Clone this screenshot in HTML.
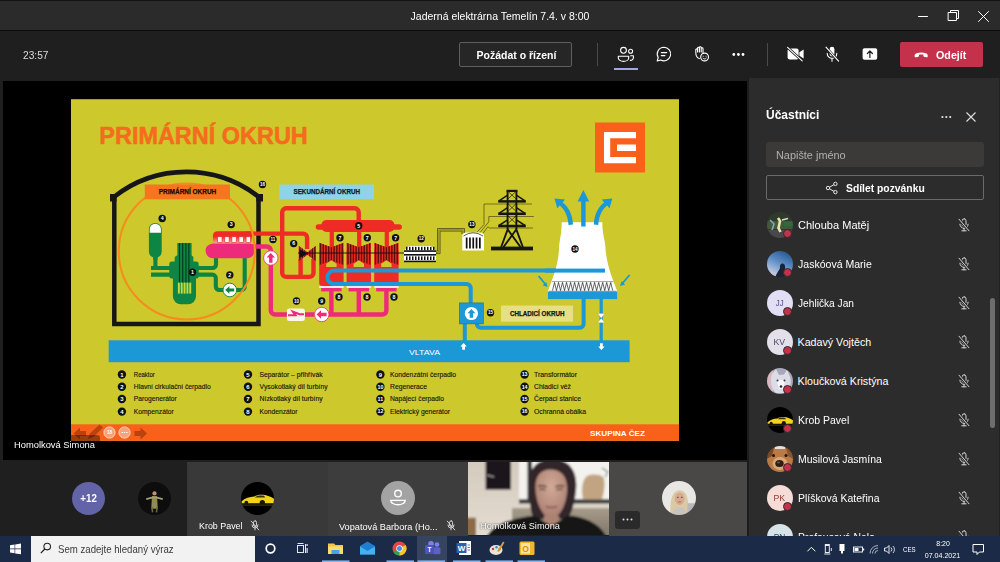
<!DOCTYPE html>
<html lang="cs">
<head>
<meta charset="utf-8">
<title>Jaderná elektrárna Temelín 7.4. v 8:00</title>
<style>
*{box-sizing:border-box;margin:0;padding:0}
html,body{width:1000px;height:562px;overflow:hidden;background:#1f1f1f;font-family:"Liberation Sans",sans-serif;color:#fff}
.abs{position:absolute}
.tx{white-space:nowrap}
#app{position:relative;width:1000px;height:562px;overflow:hidden;background:#1f1f1f}
#titlebar{left:0;top:0;width:1000px;height:30px;background:#2b2b2b;border-top:1px solid #141414}
#tline{left:0;top:30px;width:1000px;height:1px;background:#0c0c0c}
#toolbar{left:0;top:31px;width:1000px;height:47px;background:#1f1f1f}
#reqbtn{left:459px;top:42px;width:113px;height:24.500px;border:1px solid #5f5f5f;border-radius:2px;background:#262626}
.vsep{width:1px;background:#4a4a4a;top:43px;height:23px}
#leave{left:900px;top:42px;width:83px;height:25px;background:#c4314b;border-radius:2px}
#stage{left:3px;top:80.5px;width:744px;height:379px;background:#000}
#strip{left:0;top:459.5px;width:748px;height:76px;background:#1f1f1f}
#panel{left:747px;top:78px;width:253px;height:458px;background:#2c2c2c;border-left:2.500px solid #1c1c1c;border-right:1px solid #222}
#taskbar{left:0;top:535.5px;width:1000px;height:26.5px;background:#1b2a47}
.tile{top:461.7px;height:74px}
.av{border-radius:50%;overflow:hidden}
.dot{width:9px;height:9px;border-radius:50%;background:#c4314b;border:1px solid #2c2c2c}
</style>
</head>
<body>
<div id="app">
<div id="titlebar" class="abs"></div>
<div id="tline" class="abs"></div>
<div id="toolbar" class="abs"></div>
<div id="reqbtn" class="abs"></div>
<div class="abs vsep" style="left:597px"></div>
<div class="abs vsep" style="left:767px"></div>
<div id="leave" class="abs"></div>
<div class="abs tx" style="left:407.42px;top:10.32px;font-size:10.92px;line-height:13px;color:#fff;transform:scaleX(0.9615);transform-origin:50% 50%;">Jaderná elektrárna Temelín 7.4. v 8:00</div>
<div class="abs tx" style="left:22.70px;top:49.33px;font-size:10.6px;line-height:13px;color:#dcdcdc;transform:scaleX(0.9613);transform-origin:0 50%;">23:57</div>
<div class="abs tx" style="left:474.51px;top:48.62px;font-size:10.9px;line-height:13px;font-weight:bold;color:#fff;transform:scaleX(0.9617);transform-origin:50% 50%;">Požádat o řízení</div>
<div class="abs tx" style="left:936.00px;top:48.53px;font-size:11.16px;line-height:13px;font-weight:bold;color:#fff;transform:scaleX(0.9614);transform-origin:0 50%;">Odejít</div>
<svg class="abs" style="left:600px;top:0" width="400" height="78" viewBox="600 0 400 78" fill="none" stroke="#fff" stroke-width="1.1" stroke-linecap="round" stroke-linejoin="round">
<path d="M918.500 16.500H927.500" stroke-width="1"/>
<rect x="948.5" y="12.5" width="8" height="8" stroke-width="1"/><path d="M950.5 12.5V10.5H958.5V18.5H956.5" stroke-width="1"/>
<path d="M978.5 11.5L988.5 21.5M988.5 11.5L978.5 21.5" stroke-width="1"/>
<circle cx="623.5" cy="50.3" r="2.9"/><path d="M618.3 56.2H628.7V58a5.2 3.4 0 0 1-10.4 0Z"/>
<circle cx="630.6" cy="51.3" r="2"/><path d="M630.6 55.8H633.4V57.8a3 2.6 0 0 1-3 2.6"/>
<path d="M614 69H638" stroke="#a3a5e6" stroke-width="2" stroke-linecap="butt"/>
<path d="M664 47.2a6.8 6.8 0 1 1-3.3 12.8L657.2 61l1-3.5A6.8 6.8 0 0 1 664 47.2Z"/><path d="M661.3 52.6H666.7M661.3 55.6H665"/>
<circle cx="704.6" cy="57" r="3.9"/><path d="M703.2 56.2V56.3M706 56.2V56.3M702.9 58.2a2 2 0 0 0 3.4 0" stroke-width="0.9"/>
<path d="M699.4 58.6C696.5 57.6 695.8 55 695.8 52.4V49.8a0.9 0.9 0 0 1 1.8 0V52 V48.2a0.9 0.9 0 0 1 1.8 0V52 V47.6a0.9 0.9 0 0 1 1.8 0V52 V48.6a0.9 0.9 0 0 1 1.8 0V52.4"/>
<g fill="#fff" stroke="none"><circle cx="733.8" cy="54.5" r="1.4"/><circle cx="738.4" cy="54.5" r="1.4"/><circle cx="743" cy="54.5" r="1.4"/></g>
<g fill="#fff" stroke="none"><rect x="787.6" y="48.6" width="11" height="10.8" rx="2"/><path d="M799.4 52.3L803.6 49.6V58.4L799.4 55.7Z"/></g>
<path d="M787 47L802.5 61" stroke="#1f1f1f" stroke-width="2.6"/><path d="M787.6 47.4L802.2 60.8" stroke="#fff" stroke-width="1.1"/>
<rect x="829.6" y="46.8" width="4.8" height="9.6" rx="2.4" fill="#fff" stroke="none"/><path d="M827.2 53.4a4.8 4.8 0 0 0 9.6 0M832 58.4V61.2"/>
<path d="M825.4 46.8L839 61.6" stroke="#1f1f1f" stroke-width="2.6"/><path d="M826 47.2L838.6 61.2" stroke="#fff" stroke-width="1.1"/>
<rect x="862.6" y="48.2" width="14.6" height="11.6" rx="1.8" fill="#fff" stroke="none"/><path d="M869.9 57.4V51.2M867.4 53.5L869.9 51L872.4 53.5" stroke="#1f1f1f" stroke-width="1.2"/>
<path d="M914.6 56.2c0-1.2 0.4-2 1.4-2.6c3-1.6 7.4-1.6 10.4 0c1 0.6 1.4 1.4 1.4 2.6c0 0.8-0.5 1.2-1.2 1.1l-2.2-0.4c-0.6-0.1-1-0.5-1-1.1v-1c-1.4-0.5-3-0.5-4.4 0v1c0 0.6-0.4 1-1 1.1l-2.2 0.4c-0.7 0.1-1.2-0.3-1.2-1.1Z" fill="#fff" stroke="none"/>
</svg>
<div id="stage" class="abs"></div>
<svg class="abs" style="left:71px;top:99px" width="608" height="342" viewBox="71 99 608 342" font-family="'Liberation Sans',sans-serif">
<rect x="71" y="99.200" width="608" height="341.600" fill="#cdc82b"/>
<text x="99.300" y="144.100" font-size="24.700" font-weight="bold" fill="#f56c1e" stroke="#f56c1e" stroke-width="0.550" stroke-linejoin="round" textLength="208.500" lengthAdjust="spacingAndGlyphs">PRIMÁRNÍ OKRUH</text>
<rect x="595" y="122.5" width="50" height="50" fill="#f9611b"/>
<path d="M604 132H636V138.2H610.2V157H636V163.3H604Z M617 144.6H636V151H617Z" fill="#fff"/>
<rect x="108.700" y="340.300" width="520.900" height="21.900" fill="#1b98d5"/>
<text x="409" y="354.6" font-size="8" fill="#fff" textLength="31" lengthAdjust="spacingAndGlyphs">VLTAVA</text>
<rect x="71" y="424.300" width="608" height="16.500" fill="#f9611b"/>
<text x="590" y="435.8" font-size="7.6" font-weight="bold" fill="#fff" textLength="55" lengthAdjust="spacingAndGlyphs">SKUPINA ČEZ</text>
<path d="M114.300 197V323.900H258.500V197" fill="none" stroke="#161616" stroke-width="4.500"/>
<path d="M113.500 197.300A117.300 117.300 0 0 1 259.300 197.300" fill="none" stroke="#161616" stroke-width="4.600"/>
<rect x="110" y="194" width="6.500" height="7.500" fill="#161616"/><rect x="256.300" y="194" width="6.700" height="7.500" fill="#161616"/>
<g fill="none" stroke="#0e8542" stroke-width="4.1">
<path d="M155.4 256V268.05"/>
<path d="M151 268.05H172M151 274.65H172"/>
<path d="M196 268.05H212.5a3.5 3.5 0 0 0 3.5-3.5V256"/>
<path d="M196 274.65H212.3a3.5 3.5 0 0 1 3.5 3.5V286.5a3.5 3.5 0 0 0 3.5 3.5H224"/>
<path d="M236 290H241.200a3.500 3.500 0 0 0 3.500-3.500V256"/>
</g>
<path d="M148.9 229.3a6.4 6.400 0 0 1 12.800 0V251.600a6.400 6.400 0 0 1-4.200 6V260H153.300V257.600a6.400 6.400 0 0 1-4.400-6Z" fill="#0e8542"/>
<path d="M149.700 232.800V229.400a5.600 5.700 0 0 1 11.200 0V232.800Z" fill="#fff"/>
<path d="M177.300 242.900H191.600V255.300L193.400 257V261.600H196a2.700 2.700 0 0 1 2.700 2.700V276a2.500 2.500 0 0 1-2.500 2.500H196V296.300a8 8 0 0 1-8 8H180.900a8 8 0 0 1-8-8V278.500H171.800a2.500 2.500 0 0 1-2.500-2.500V264.300a2.700 2.700 0 0 1 2.700-2.700H174.700V257L177.300 255.300Z" fill="#0e8542"/>
<rect x="178.95" y="243" width="1.1" height="39.500" fill="#06351b"/>
<rect x="182.15" y="243" width="1.1" height="39.500" fill="#06351b"/>
<rect x="185.35" y="243" width="1.1" height="39.500" fill="#06351b"/>
<rect x="188.35" y="243" width="1.1" height="39.500" fill="#06351b"/>
<rect x="177.90" y="282.600" width="1.900" height="11" fill="#c9da3e"/>
<rect x="180.75" y="282.600" width="1.900" height="11" fill="#c9da3e"/>
<rect x="183.60" y="282.600" width="1.900" height="11" fill="#c9da3e"/>
<rect x="186.45" y="282.600" width="1.900" height="11" fill="#c9da3e"/>
<rect x="189.30" y="282.600" width="1.900" height="11" fill="#c9da3e"/>
<circle cx="229.800" cy="290" r="6.800" fill="#fff" stroke="#0e8542" stroke-width="0.900"/>
<path d="M225.200 290l4.200-3.800v2.300h4.800v3h-4.800v2.300z" fill="#0e8542"/>
<g fill="none" stroke="#ee2b24" stroke-width="4.4">
<path d="M245 233.6H303.100a4 4 0 0 1 4 4V249"/>
<path d="M300.600 259V277M313.500 259V272.900a4 4 0 0 1-4 4H286.200a4 4 0 0 1-4-4V212.300a4 4 0 0 1 4-4H354.700a4 4 0 0 1 4 4V222"/>
<path d="M331.800 230V250M359.200 230V250M386.800 230V250" stroke-width="4.200"/>
</g>
<rect x="321.4" y="220" width="73" height="12" rx="5" fill="#ee2b24"/>
<rect x="315.7" y="224.2" width="86.2" height="5.6" rx="2.8" fill="#ee2b24"/>
<path d="M319.2 250H343.59999999999997V283a3 3 0 0 1-3 3H322.2a3 3 0 0 1-3-3Z" fill="#ee2b24"/>
<rect x="319.2" y="286" width="24.4" height="2" fill="#f6e6ee"/>
<path d="M346.6 250H371.0V283a3 3 0 0 1-3 3H349.6a3 3 0 0 1-3-3Z" fill="#ee2b24"/>
<rect x="346.6" y="286" width="24.4" height="2" fill="#f6e6ee"/>
<path d="M374.2 250H398.59999999999997V283a3 3 0 0 1-3 3H377.2a3 3 0 0 1-3-3Z" fill="#ee2b24"/>
<rect x="374.2" y="286" width="24.4" height="2" fill="#f6e6ee"/>
<g fill="none" stroke="#ee2a7b" stroke-width="4.4">
<path d="M331.4 288V314.5M358.8 288V314.5M386.4 288V310.5a4 4 0 0 1-4 4H329"/>
<path d="M314.5 314.5H305M287 314.5H275a4.2 4.2 0 0 1-4.2-4.2V265"/>
<path d="M270.8 251V250.5a4 4 0 0 0-4-4H252"/>
</g>
<rect x="321.2" y="288" width="20.4" height="3.4" fill="#ee2a7b"/>
<rect x="348.6" y="288" width="20.4" height="3.4" fill="#ee2a7b"/>
<rect x="376.2" y="288" width="20.4" height="3.4" fill="#ee2a7b"/>
<path d="M319.2 242.70000000000002L331.4 247.20000000000002L343.59999999999997 242.70000000000002V264.90000000000003L331.4 260.40000000000003L319.2 264.90000000000003Z" fill="#ee2b24"/>
<clipPath id="c319"><path d="M319.2 242.70000000000002L331.4 247.20000000000002L343.59999999999997 242.70000000000002V264.90000000000003L331.4 260.40000000000003L319.2 264.90000000000003Z"/></clipPath>
<g clip-path="url(#c319)">
<rect x="319.88" y="242.70000000000002" width="1.36" height="22.2" fill="#5a0f0c"/>
<rect x="322.59" y="242.70000000000002" width="1.36" height="22.2" fill="#5a0f0c"/>
<rect x="325.30" y="242.70000000000002" width="1.36" height="22.2" fill="#5a0f0c"/>
<rect x="328.01" y="242.70000000000002" width="1.36" height="22.2" fill="#5a0f0c"/>
<rect x="330.72" y="242.70000000000002" width="1.36" height="22.2" fill="#5a0f0c"/>
<rect x="333.43" y="242.70000000000002" width="1.36" height="22.2" fill="#5a0f0c"/>
<rect x="336.14" y="242.70000000000002" width="1.36" height="22.2" fill="#5a0f0c"/>
<rect x="338.86" y="242.70000000000002" width="1.36" height="22.2" fill="#5a0f0c"/>
<rect x="341.57" y="242.70000000000002" width="1.36" height="22.2" fill="#5a0f0c"/>
</g>
<path d="M326.2 267V263.700L331.4 260.200L336.59999999999997 263.700V267Z" fill="#cdc82b"/>
<path d="M346.6 242.70000000000002L358.8 247.20000000000002L371.0 242.70000000000002V264.90000000000003L358.8 260.40000000000003L346.6 264.90000000000003Z" fill="#ee2b24"/>
<clipPath id="c346"><path d="M346.6 242.70000000000002L358.8 247.20000000000002L371.0 242.70000000000002V264.90000000000003L358.8 260.40000000000003L346.6 264.90000000000003Z"/></clipPath>
<g clip-path="url(#c346)">
<rect x="347.28" y="242.70000000000002" width="1.36" height="22.2" fill="#5a0f0c"/>
<rect x="349.99" y="242.70000000000002" width="1.36" height="22.2" fill="#5a0f0c"/>
<rect x="352.70" y="242.70000000000002" width="1.36" height="22.2" fill="#5a0f0c"/>
<rect x="355.41" y="242.70000000000002" width="1.36" height="22.2" fill="#5a0f0c"/>
<rect x="358.12" y="242.70000000000002" width="1.36" height="22.2" fill="#5a0f0c"/>
<rect x="360.83" y="242.70000000000002" width="1.36" height="22.2" fill="#5a0f0c"/>
<rect x="363.54" y="242.70000000000002" width="1.36" height="22.2" fill="#5a0f0c"/>
<rect x="366.26" y="242.70000000000002" width="1.36" height="22.2" fill="#5a0f0c"/>
<rect x="368.97" y="242.70000000000002" width="1.36" height="22.2" fill="#5a0f0c"/>
</g>
<path d="M353.6 267V263.700L358.8 260.200L364.0 263.700V267Z" fill="#cdc82b"/>
<path d="M374.2 242.70000000000002L386.4 247.20000000000002L398.59999999999997 242.70000000000002V264.90000000000003L386.4 260.40000000000003L374.2 264.90000000000003Z" fill="#ee2b24"/>
<clipPath id="c374"><path d="M374.2 242.70000000000002L386.4 247.20000000000002L398.59999999999997 242.70000000000002V264.90000000000003L386.4 260.40000000000003L374.2 264.90000000000003Z"/></clipPath>
<g clip-path="url(#c374)">
<rect x="374.88" y="242.70000000000002" width="1.36" height="22.2" fill="#5a0f0c"/>
<rect x="377.59" y="242.70000000000002" width="1.36" height="22.2" fill="#5a0f0c"/>
<rect x="380.30" y="242.70000000000002" width="1.36" height="22.2" fill="#5a0f0c"/>
<rect x="383.01" y="242.70000000000002" width="1.36" height="22.2" fill="#5a0f0c"/>
<rect x="385.72" y="242.70000000000002" width="1.36" height="22.2" fill="#5a0f0c"/>
<rect x="388.43" y="242.70000000000002" width="1.36" height="22.2" fill="#5a0f0c"/>
<rect x="391.14" y="242.70000000000002" width="1.36" height="22.2" fill="#5a0f0c"/>
<rect x="393.86" y="242.70000000000002" width="1.36" height="22.2" fill="#5a0f0c"/>
<rect x="396.57" y="242.70000000000002" width="1.36" height="22.2" fill="#5a0f0c"/>
</g>
<path d="M381.2 267V263.700L386.4 260.200L391.59999999999997 263.700V267Z" fill="#cdc82b"/>
<path d="M298.7 245.7L307.35 252.3L316 245.7V261.3L307.35 254.7L298.7 261.3Z" fill="#ee2b24"/>
<clipPath id="c298"><path d="M298.7 245.7L307.35 252.3L316 245.7V261.3L307.35 254.7L298.7 261.3Z"/></clipPath>
<g clip-path="url(#c298)">
<rect x="299.32" y="245.7" width="1.24" height="15.6" fill="#5a0f0c"/>
<rect x="301.79" y="245.7" width="1.24" height="15.6" fill="#5a0f0c"/>
<rect x="304.26" y="245.7" width="1.24" height="15.6" fill="#5a0f0c"/>
<rect x="306.73" y="245.7" width="1.24" height="15.6" fill="#5a0f0c"/>
<rect x="309.20" y="245.7" width="1.24" height="15.6" fill="#5a0f0c"/>
<rect x="311.68" y="245.7" width="1.24" height="15.6" fill="#5a0f0c"/>
<rect x="314.15" y="245.7" width="1.24" height="15.6" fill="#5a0f0c"/>
</g>
<path d="M299.500 249.300L307.800 253.600L299.500 258Z" fill="#141010"/>
<path d="M298 253H437" stroke="#111" stroke-width="0.9"/>
<linearGradient id="sgg" x1="0" y1="0" x2="0" y2="1"><stop offset="0" stop-color="#ee2b24"/><stop offset="0.35" stop-color="#ee2b24"/><stop offset="1" stop-color="#fbd5dc"/></linearGradient>
<path d="M212.900 246V235.800a4.500 4.500 0 0 1 4.500-4.500H252V246Z" fill="url(#sgg)"/>
<path d="M213 243.500H250.500C253.500 244.500 254.600 247 254.600 250.300C254.600 255 251.500 258.300 246.500 258.300H213.500C208.500 258.300 205.600 255 205.600 250.300C205.600 247 207.500 244.500 213 243.500Z" fill="#ee2a7b"/>
<rect x="217.7" y="236.800" width="4.300" height="5.600" fill="#fdf6f2" stroke="#d8342c" stroke-width="0.600"/>
<rect x="224.8" y="236.800" width="4.300" height="5.600" fill="#fdf6f2" stroke="#d8342c" stroke-width="0.600"/>
<rect x="231.9" y="236.800" width="4.300" height="5.600" fill="#fdf6f2" stroke="#d8342c" stroke-width="0.600"/>
<rect x="239.0" y="236.800" width="4.300" height="5.600" fill="#fdf6f2" stroke="#d8342c" stroke-width="0.600"/>
<rect x="246.1" y="236.800" width="4.300" height="5.600" fill="#fdf6f2" stroke="#d8342c" stroke-width="0.600"/>
<circle cx="186.800" cy="251.400" r="68" fill="none" stroke="#f68b1f" stroke-width="2"/>
<circle cx="270.8" cy="258" r="7.2" fill="#fff" stroke="#ee2a7b" stroke-width="0.8"/>
<path d="M270.8 253l4.2 4.4h-2.5v5.4h-3.4v-5.4h-2.5z" fill="#ee2a7b"/>
<circle cx="321.7" cy="314.5" r="7.2" fill="#fff" stroke="#ee2a7b" stroke-width="0.8"/>
<path d="M316.6 314.5l4.4-4.2v2.5h5.6v3.4h-5.6v2.5z" fill="#ee2a7b"/>
<rect x="286.9" y="308.6" width="18" height="12.4" rx="2.5" fill="#fbf6e8"/>
<path d="M288 315.300H295.500L293 311.800L299.500 314.300H304" fill="none" stroke="#ee2a7b" stroke-width="2.100" stroke-linejoin="miter"/>
<g fill="none" stroke="#1b98d5" stroke-width="4">
<path d="M605 270.6H334.100a6.700 6.700 0 0 0 0 13.400H466.500a4.2 4.2 0 0 1 4.2 4.2V303"/>
<path d="M464.8 323V341"/>
<path d="M476.9 323V324a3.8 3.8 0 0 0 3.8 3.8H579.8a3.8 3.8 0 0 0 3.8-3.8V298"/>
<path d="M601.2 298V341" stroke-width="3.2"/>
</g>
<rect x="459.3" y="302.9" width="24.2" height="21" fill="#1b98d5" stroke="#13699a" stroke-width="0.5"/>
<circle cx="471.4" cy="313.5" r="6.6" fill="#fff"/>
<path d="M471.4 309l4 4.2h-2.3v4.6h-3.4v-4.6h-2.3z" fill="#1b98d5"/>
<path d="M597.6 313.6H604.8L601.2 318.2ZM597.6 322.8H604.8L601.2 318.2Z" fill="#fff" stroke="#8a8a50" stroke-width="0.3"/>
<path d="M463.6 343l3.2 3.4h-1.8v3.4h-2.8v-3.4h-1.8z" fill="#fff"/>
<path d="M601.4 350l3.2-3.4h-1.8v-3.4h-2.8v3.4h-1.8z" fill="#fff"/>
<path d="M404 262V250.5L409 246H431L436 250.5V262Z" fill="#fff"/>
<rect x="404" y="250.3" width="32" height="1.6" fill="#111"/><rect x="404" y="254" width="32" height="1.6" fill="#111"/><rect x="404" y="260.6" width="32" height="1.6" fill="#111"/>
<rect x="406" y="246.8" width="1.5" height="3.5" fill="#111"/><rect x="406" y="256.4" width="1.5" height="3.6" fill="#111"/>
<rect x="409" y="246.8" width="1.5" height="3.5" fill="#111"/><rect x="409" y="256.4" width="1.5" height="3.6" fill="#111"/>
<rect x="412" y="246.8" width="1.5" height="3.5" fill="#111"/><rect x="412" y="256.4" width="1.5" height="3.6" fill="#111"/>
<rect x="415" y="246.8" width="1.5" height="3.5" fill="#111"/><rect x="415" y="256.4" width="1.5" height="3.6" fill="#111"/>
<rect x="418" y="246.8" width="1.5" height="3.5" fill="#111"/><rect x="418" y="256.4" width="1.5" height="3.6" fill="#111"/>
<rect x="421" y="246.8" width="1.5" height="3.5" fill="#111"/><rect x="421" y="256.4" width="1.5" height="3.6" fill="#111"/>
<rect x="424" y="246.8" width="1.5" height="3.5" fill="#111"/><rect x="424" y="256.4" width="1.5" height="3.6" fill="#111"/>
<rect x="427" y="246.8" width="1.5" height="3.5" fill="#111"/><rect x="427" y="256.4" width="1.5" height="3.6" fill="#111"/>
<rect x="430" y="246.8" width="1.5" height="3.5" fill="#111"/><rect x="430" y="256.4" width="1.5" height="3.6" fill="#111"/>
<rect x="433" y="246.8" width="1.5" height="3.5" fill="#111"/><rect x="433" y="256.4" width="1.5" height="3.6" fill="#111"/>
<path d="M436 251.0H437.5V228.5H464.5V234" fill="none" stroke="#3b3a12" stroke-width="0.7"/>
<path d="M436 252.3H438.8V229.8H463.2V234" fill="none" stroke="#6a6820" stroke-width="0.7"/>
<path d="M436 253.6H440.1V231.1H461.9V234" fill="none" stroke="#3b3a12" stroke-width="0.7"/>
<path d="M462.3 250.4V236.5a4 4 0 0 1 4-4H480a4 4 0 0 1 4 4V250.4Z" fill="#fff"/>
<path d="M463.5 236Q473 229.5 483 236" fill="none" stroke="#333" stroke-width="0.8"/>
<rect x="465.8" y="237.5" width="1.7" height="11" fill="#111"/>
<rect x="469.1" y="237.5" width="1.7" height="11" fill="#111"/>
<rect x="472.4" y="237.5" width="1.7" height="11" fill="#111"/>
<rect x="475.7" y="237.5" width="1.7" height="11" fill="#111"/>
<rect x="479.0" y="237.5" width="1.7" height="11" fill="#111"/>
<g fill="none" stroke="#4a4916" stroke-width="0.700">
<path d="M477.200 232L484 224.500V204H532"/><path d="M480 232.600L488.800 221.800V216.500H533.800"/><path d="M483 233.300L487.800 226.800L489.500 228H533"/>
</g>
<g stroke="#161616" fill="none" stroke-width="1.900" stroke-linejoin="miter">
<path d="M507.600 190.500V229.500L501.200 247M516.400 190.500V229.500L522.800 247M507.800 229.500L520.500 247M516.200 229.500L503.500 247"/>
<path d="M506.600 190.900H517.400" stroke-width="2.200"/>
<path d="M498.200 201.4H525.800" stroke-width="2.500"/>
<path d="M499 200.9L507.600 195.20000000000002M525 200.9L516.400 195.20000000000002" stroke-width="1.500"/>
<path d="M508 191.4L516 198.9M516 191.4L508 198.9" stroke-width="0.700"/>
<path d="M498.200 213.8H525.800" stroke-width="2.500"/>
<path d="M499 213.3L507.600 207.60000000000002M525 213.3L516.400 207.60000000000002" stroke-width="1.500"/>
<path d="M508 203.8L516 211.3M516 203.8L508 211.3" stroke-width="0.700"/>
<path d="M498.200 226H525.800" stroke-width="2.500"/>
<path d="M499 225.5L507.600 219.8M525 225.5L516.400 219.8" stroke-width="1.500"/>
<path d="M508 216L516 223.5M516 216L508 223.5" stroke-width="0.700"/>
</g>
<rect x="491" y="246.600" width="42" height="3.800" fill="#161616"/>
<path d="M561.7 222.3H602.3C602.3 236 605.5 240 605.6 250C607 266 613 280 617.4 291.5V299H547.8V291.5C552 280 558 266 559 250C559 240 561.7 236 561.7 222.3Z" fill="#fff"/>
<rect x="547.8" y="291.5" width="69.6" height="7.6" fill="#1b98d5"/>
<rect x="545" y="268.600" width="60" height="4" fill="#1b98d5"/>
<path d="M552.5 290.6L554.5 282.4L556.5 290.6L558.5 282.4L560.5 290.6L562.5 282.4L564.5 290.6L566.5 282.4L568.6 290.6L570.6 282.4L572.6 290.6L574.6 282.4L576.6 290.6L578.6 282.4L580.6 290.6L582.6 282.4L584.6 290.6L586.6 282.4L588.6 290.6L590.6 282.4L592.6 290.6L594.6 282.4L596.6 290.6L598.7 282.4L600.7 290.6L602.7 282.4L604.7 290.6L606.7 282.4L608.7 290.6L610.7 282.4L612.7 290.6" fill="none" stroke="#222" stroke-width="0.7"/>
<path d="M552 281.6H613.4M549 291.2H616.4" stroke="#444" stroke-width="0.5"/>
<g fill="#1b98d5">
<path d="M581.2 226.5V201.5H577.6L583.4 190L589.2 201.5H585.6V226.5Z"/>
<path d="M568.5 225C568 214 563 208 559.5 205.5L557.3 208.5L554.5 198.5L565 199.5L562.6 202.5C567.5 206 572.5 213 573 224.5Z"/>
<path d="M598.3 225C598.8 214 603.8 208 607.3 205.5L609.5 208.5L612.3 198.5L601.8 199.5L604.2 202.5C599.3 206 594.3 213 593.8 224.5Z"/>
</g>
<path d="M538.6 276L545.6 284.5" stroke="#1b98d5" stroke-width="1.8"/><path d="M547.6 287L542.6 285.2L546.3 282.2Z" fill="#1b98d5"/>
<path d="M629.6 275L622.2 283.5" stroke="#1b98d5" stroke-width="1.8"/><path d="M620 286L625.2 284.4L621.6 281.2Z" fill="#1b98d5"/>
<rect x="144.8" y="184.5" width="85.2" height="14.8" fill="#f5761f"/>
<text x="158.800" y="194.100" font-size="6.500" font-weight="bold" fill="#1a0d06" stroke="#1a0d06" stroke-width="0.250" textLength="57.500" lengthAdjust="spacingAndGlyphs">PRIMÁRNÍ OKRUH</text>
<rect x="279.3" y="184.5" width="94.7" height="14.8" fill="#8ed3e6"/>
<text x="293.500" y="194.100" font-size="6.500" font-weight="bold" fill="#0c1a2c" stroke="#0c1a2c" stroke-width="0.250" textLength="66.500" lengthAdjust="spacingAndGlyphs">SEKUNDÁRNÍ OKRUH</text>
<rect x="501" y="305.5" width="72" height="16.2" fill="#e6df86"/>
<text x="510" y="316" font-size="6.500" font-weight="bold" fill="#15150c" stroke="#15150c" stroke-width="0.250" textLength="54.500" lengthAdjust="spacingAndGlyphs">CHLADICÍ OKRUH</text>
<circle cx="192.5" cy="272.2" r="3.7" fill="#111"/><text x="192.5" y="274.09" font-size="5.25" font-weight="bold" fill="#fff" text-anchor="middle">1</text>
<circle cx="229.8" cy="274.9" r="3.7" fill="#111"/><text x="229.8" y="276.79" font-size="5.25" font-weight="bold" fill="#fff" text-anchor="middle">2</text>
<circle cx="231.2" cy="224.6" r="3.7" fill="#111"/><text x="231.2" y="226.49" font-size="5.25" font-weight="bold" fill="#fff" text-anchor="middle">3</text>
<circle cx="162.2" cy="218.5" r="3.7" fill="#111"/><text x="162.2" y="220.39" font-size="5.25" font-weight="bold" fill="#fff" text-anchor="middle">4</text>
<circle cx="358.7" cy="225.8" r="3.7" fill="#111"/><text x="358.7" y="227.69" font-size="5.25" font-weight="bold" fill="#fff" text-anchor="middle">5</text>
<circle cx="293.7" cy="243.6" r="3.7" fill="#111"/><text x="293.7" y="245.49" font-size="5.25" font-weight="bold" fill="#fff" text-anchor="middle">6</text>
<circle cx="340" cy="237.7" r="3.7" fill="#111"/><text x="340" y="239.59" font-size="5.25" font-weight="bold" fill="#fff" text-anchor="middle">7</text>
<circle cx="367.3" cy="237.7" r="3.7" fill="#111"/><text x="367.3" y="239.59" font-size="5.25" font-weight="bold" fill="#fff" text-anchor="middle">7</text>
<circle cx="395.6" cy="237.7" r="3.7" fill="#111"/><text x="395.6" y="239.59" font-size="5.25" font-weight="bold" fill="#fff" text-anchor="middle">7</text>
<circle cx="339" cy="297" r="3.7" fill="#111"/><text x="339" y="298.89" font-size="5.25" font-weight="bold" fill="#fff" text-anchor="middle">8</text>
<circle cx="367" cy="297" r="3.7" fill="#111"/><text x="367" y="298.89" font-size="5.25" font-weight="bold" fill="#fff" text-anchor="middle">8</text>
<circle cx="394" cy="297" r="3.7" fill="#111"/><text x="394" y="298.89" font-size="5.25" font-weight="bold" fill="#fff" text-anchor="middle">8</text>
<circle cx="321.7" cy="301" r="3.7" fill="#111"/><text x="321.7" y="302.89" font-size="5.25" font-weight="bold" fill="#fff" text-anchor="middle">9</text>
<circle cx="296.5" cy="301" r="3.7" fill="#111"/><text x="296.5" y="302.67" font-size="4.62" font-weight="bold" fill="#fff" text-anchor="middle">10</text>
<circle cx="273" cy="239.5" r="3.7" fill="#111"/><text x="273" y="241.16" font-size="4.62" font-weight="bold" fill="#fff" text-anchor="middle">11</text>
<circle cx="421.2" cy="238.7" r="3.7" fill="#111"/><text x="421.2" y="240.36" font-size="4.62" font-weight="bold" fill="#fff" text-anchor="middle">12</text>
<circle cx="471.9" cy="224.5" r="3.7" fill="#111"/><text x="471.9" y="226.16" font-size="4.62" font-weight="bold" fill="#fff" text-anchor="middle">13</text>
<circle cx="575" cy="249" r="3.7" fill="#111"/><text x="575" y="250.66" font-size="4.62" font-weight="bold" fill="#fff" text-anchor="middle">14</text>
<circle cx="490.5" cy="312.8" r="3.7" fill="#111"/><text x="490.5" y="314.47" font-size="4.62" font-weight="bold" fill="#fff" text-anchor="middle">15</text>
<circle cx="262.5" cy="184.5" r="3.7" fill="#111"/><text x="262.5" y="186.16" font-size="4.62" font-weight="bold" fill="#fff" text-anchor="middle">16</text>
<circle cx="121.9" cy="374.5" r="4.2" fill="#111"/><text x="121.9" y="376.65" font-size="5.96" font-weight="bold" fill="#fff" text-anchor="middle">1</text>
<text x="133.8" y="376.7" font-size="6.600" fill="#14140a" stroke="#14140a" stroke-width="0.120" textLength="21" lengthAdjust="spacingAndGlyphs">Reaktor</text>
<circle cx="121.9" cy="386.8" r="4.2" fill="#111"/><text x="121.9" y="388.95" font-size="5.96" font-weight="bold" fill="#fff" text-anchor="middle">2</text>
<text x="133.8" y="389.0" font-size="6.600" fill="#14140a" stroke="#14140a" stroke-width="0.120" textLength="77" lengthAdjust="spacingAndGlyphs">Hlavní cirkulační čerpadlo</text>
<circle cx="121.9" cy="399" r="4.2" fill="#111"/><text x="121.9" y="401.15" font-size="5.96" font-weight="bold" fill="#fff" text-anchor="middle">3</text>
<text x="133.8" y="401.2" font-size="6.600" fill="#14140a" stroke="#14140a" stroke-width="0.120" textLength="43" lengthAdjust="spacingAndGlyphs">Parogenerátor</text>
<circle cx="121.9" cy="411.6" r="4.2" fill="#111"/><text x="121.9" y="413.75" font-size="5.96" font-weight="bold" fill="#fff" text-anchor="middle">4</text>
<text x="133.8" y="413.8" font-size="6.600" fill="#14140a" stroke="#14140a" stroke-width="0.120" textLength="40" lengthAdjust="spacingAndGlyphs">Kompenzátor</text>
<circle cx="248" cy="374.5" r="4.2" fill="#111"/><text x="248" y="376.65" font-size="5.96" font-weight="bold" fill="#fff" text-anchor="middle">5</text>
<text x="259.6" y="376.7" font-size="6.600" fill="#14140a" stroke="#14140a" stroke-width="0.120" textLength="63" lengthAdjust="spacingAndGlyphs">Separátor – přihřívák</text>
<circle cx="248" cy="386.8" r="4.2" fill="#111"/><text x="248" y="388.95" font-size="5.96" font-weight="bold" fill="#fff" text-anchor="middle">6</text>
<text x="259.6" y="389.0" font-size="6.600" fill="#14140a" stroke="#14140a" stroke-width="0.120" textLength="68" lengthAdjust="spacingAndGlyphs">Vysokotlaký díl turbíny</text>
<circle cx="248" cy="399" r="4.2" fill="#111"/><text x="248" y="401.15" font-size="5.96" font-weight="bold" fill="#fff" text-anchor="middle">7</text>
<text x="259.6" y="401.2" font-size="6.600" fill="#14140a" stroke="#14140a" stroke-width="0.120" textLength="63" lengthAdjust="spacingAndGlyphs">Nízkotlaký díl turbíny</text>
<circle cx="248" cy="411.6" r="4.2" fill="#111"/><text x="248" y="413.75" font-size="5.96" font-weight="bold" fill="#fff" text-anchor="middle">8</text>
<text x="259.6" y="413.8" font-size="6.600" fill="#14140a" stroke="#14140a" stroke-width="0.120" textLength="38" lengthAdjust="spacingAndGlyphs">Kondenzátor</text>
<circle cx="380.4" cy="374.5" r="4.2" fill="#111"/><text x="380.4" y="376.65" font-size="5.96" font-weight="bold" fill="#fff" text-anchor="middle">9</text>
<text x="390" y="376.7" font-size="6.600" fill="#14140a" stroke="#14140a" stroke-width="0.120" textLength="66" lengthAdjust="spacingAndGlyphs">Kondenzátní čerpadlo</text>
<circle cx="380.4" cy="386.8" r="4.2" fill="#111"/><text x="380.4" y="388.69" font-size="5.25" font-weight="bold" fill="#fff" text-anchor="middle">10</text>
<text x="390" y="389.0" font-size="6.600" fill="#14140a" stroke="#14140a" stroke-width="0.120" textLength="37" lengthAdjust="spacingAndGlyphs">Regenerace</text>
<circle cx="380.4" cy="399" r="4.2" fill="#111"/><text x="380.4" y="400.89" font-size="5.25" font-weight="bold" fill="#fff" text-anchor="middle">11</text>
<text x="390" y="401.2" font-size="6.600" fill="#14140a" stroke="#14140a" stroke-width="0.120" textLength="54" lengthAdjust="spacingAndGlyphs">Napájecí čerpadlo</text>
<circle cx="380.4" cy="411.6" r="4.2" fill="#111"/><text x="380.4" y="413.49" font-size="5.25" font-weight="bold" fill="#fff" text-anchor="middle">12</text>
<text x="390" y="413.8" font-size="6.600" fill="#14140a" stroke="#14140a" stroke-width="0.120" textLength="60" lengthAdjust="spacingAndGlyphs">Elektrický generátor</text>
<circle cx="524.6" cy="374.5" r="4.2" fill="#111"/><text x="524.6" y="376.39" font-size="5.25" font-weight="bold" fill="#fff" text-anchor="middle">13</text>
<text x="534" y="376.7" font-size="6.600" fill="#14140a" stroke="#14140a" stroke-width="0.120" textLength="43" lengthAdjust="spacingAndGlyphs">Transformátor</text>
<circle cx="524.6" cy="386.8" r="4.2" fill="#111"/><text x="524.6" y="388.69" font-size="5.25" font-weight="bold" fill="#fff" text-anchor="middle">14</text>
<text x="534" y="389.0" font-size="6.600" fill="#14140a" stroke="#14140a" stroke-width="0.120" textLength="37" lengthAdjust="spacingAndGlyphs">Chladicí věž</text>
<circle cx="524.6" cy="399" r="4.2" fill="#111"/><text x="524.6" y="400.89" font-size="5.25" font-weight="bold" fill="#fff" text-anchor="middle">15</text>
<text x="534" y="401.2" font-size="6.600" fill="#14140a" stroke="#14140a" stroke-width="0.120" textLength="47" lengthAdjust="spacingAndGlyphs">Čerpací stanice</text>
<circle cx="524.6" cy="411.6" r="4.2" fill="#111"/><text x="524.6" y="413.49" font-size="5.25" font-weight="bold" fill="#fff" text-anchor="middle">16</text>
<text x="534" y="413.8" font-size="6.600" fill="#14140a" stroke="#14140a" stroke-width="0.120" textLength="52" lengthAdjust="spacingAndGlyphs">Ochranná obálka</text>
<path d="M73.5 433.5L80 427.5V431H86V436H80V439.5Z" fill="#b8430f"/>
<path d="M147 433.5L140.5 427.5V431H134.5V436H140.5V439.5Z" fill="#b8430f"/>
<path d="M88 439L90 433.5L99.5 424.5L103 427.5L93.5 437Z" fill="#b8430f"/>
<circle cx="109.5" cy="432.5" r="5.6" fill="#f7a27a" stroke="#fbe0d0" stroke-width="0.9"/><circle cx="124.5" cy="432.5" r="5.6" fill="#f7a27a" stroke="#fbe0d0" stroke-width="0.9"/>
<text x="109.5" y="434.3" font-size="4.6" fill="#fff" text-anchor="middle" font-weight="bold">18</text>
<path d="M121.5 432.5H127.5" stroke="#fff" stroke-width="1.2" stroke-dasharray="1.4 0.9"/>
</svg>
<div id="strip" class="abs"></div>
<div class="abs" style="left:3px;top:434.500px;width:97px;height:25px;background:rgba(0,0,0,0.380);border-radius:0 3px 0 0"></div>
<div class="abs tx" style="left:14.00px;top:439.13px;font-size:9.72px;line-height:12px;color:#fff;transform:scaleX(0.9611);transform-origin:0 50%;">Homolková Simona</div>
<div class="abs tile" style="left:186.700px;width:141.300px;background:#393939"></div>
<div class="abs tile" style="left:328px;width:140px;background:#3d3d3d"></div>
<div class="abs tile" style="left:609px;width:139px;background:#4a4847"></div>
<div class="abs av" style="left:72px;top:481.5px;width:33px;height:33px;background:#6264a7"></div>
<div class="abs tx" style="left:80.12px;top:492.59px;font-size:10.12px;line-height:12px;font-weight:bold;color:#fff;transform:scaleX(0.9612);transform-origin:50% 50%;">+12</div>
<svg class="abs" style="left:137.5px;top:481.5px" width="33" height="33" viewBox="0 0 26 26"><defs><clipPath id="sa1"><circle cx="13" cy="13" r="13"/></clipPath><filter id="sa1b" x="-10%" y="-10%" width="120%" height="120%"><feGaussianBlur stdDeviation="0.450"/></filter></defs><g clip-path="url(#sa1)"><g filter="url(#sa1b)"><rect x="-2" y="-2" width="30" height="30" fill="#0b0907"/><circle cx="13" cy="9" r="1.700" fill="#b89478"/><path d="M11 11H15L15.600 21H10.400Z" fill="#8c8c52"/><path d="M6.500 13.500L11 12.300L15 12.300L19.500 13.500" stroke="#a8a070" stroke-width="1.500" fill="none"/><path d="M11 20L11.500 24M15 20L14.500 24" stroke="#6a6a40" stroke-width="1.300"/></g></g></svg>
<svg class="abs" style="left:240.5px;top:481.5px" width="33" height="33" viewBox="0 0 26 26"><defs><clipPath id="sa2"><circle cx="13" cy="13" r="13"/></clipPath><filter id="sa2b" x="-10%" y="-10%" width="120%" height="120%"><feGaussianBlur stdDeviation="0.450"/></filter></defs><g clip-path="url(#sa2)"><g filter="url(#sa2b)"><rect x="-2" y="-2" width="30" height="30" fill="#050505"/><path d="M0.500 15.200C3 12.800 7 11.800 10.500 11.500C12.500 10 16 9.600 19 10.300C21.500 10.900 24 12 26 13.200V16.800H0.500Z" fill="#f3d316"/><path d="M11.500 11.600C13.200 10.500 16 10.300 18.200 10.900L19 12.200H11Z" fill="#3a3208"/><circle cx="16.800" cy="16.200" r="2.100" fill="#15130a"/><circle cx="4.200" cy="16.300" r="1.500" fill="#15130a"/><rect x="0" y="17.600" width="26" height="1.300" fill="#2a2608"/></g></g></svg>
<div class="abs tx" style="left:198.60px;top:520.79px;font-size:9.25px;line-height:11px;color:#fff;transform:scaleX(0.9613);transform-origin:0 50%;">Krob Pavel</div><svg class="abs" style="left:249px;top:519px" width="12" height="13" viewBox="0 0 16 16" fill="none" stroke="#e4e4e4" stroke-width="1.2" stroke-linecap="round"><rect x="6" y="1.8" width="4" height="7.4" rx="2"/><path d="M3.9 7.2a4.1 4.1 0 0 0 8.2 0M8 11.4V13.8"/><path d="M3 2.2L13 13.800"/></svg>
<div class="abs av" style="left:381px;top:481px;width:34px;height:34px;background:#a3a3a3"></div>
<svg class="abs" style="left:381px;top:481px" width="34" height="34" viewBox="0 0 34 34" fill="none" stroke="#fff" stroke-width="1.4"><circle cx="17" cy="12.6" r="3.3"/><path d="M9.8 19.4H24.200a7.2 4.4 0 0 1-14.4 0Z"/></svg>
<div class="abs tx" style="left:339.00px;top:520.69px;font-size:9.56px;line-height:11px;color:#fff;transform:scaleX(0.9613);transform-origin:0 50%;">Vopatová Barbora (Ho...</div><svg class="abs" style="left:445px;top:519px" width="12" height="13" viewBox="0 0 16 16" fill="none" stroke="#e4e4e4" stroke-width="1.2" stroke-linecap="round"><rect x="6" y="1.8" width="4" height="7.4" rx="2"/><path d="M3.9 7.2a4.1 4.1 0 0 0 8.2 0M8 11.4V13.8"/><path d="M3 2.2L13 13.800"/></svg>
<div class="abs" style="left:468px;top:461.7px;width:141px;height:73.8px;overflow:hidden;background:#d9d2c6"><svg width="141" height="74" viewBox="0 0 141 74"><defs><linearGradient id="vw" x1="0" x2="0" y1="0" y2="1"><stop offset="0" stop-color="#d3cabc"/><stop offset="1" stop-color="#e4ddd2"/></linearGradient><linearGradient id="vs" x1="0" x2="0" y1="0" y2="1"><stop offset="0" stop-color="#a79c8b"/><stop offset="1" stop-color="#7d7466"/></linearGradient><radialGradient id="vf" cx="0.5" cy="0.35" r="0.7"><stop offset="0" stop-color="#d2aa98"/><stop offset="1" stop-color="#a67a6c"/></radialGradient><filter id="bl" x="-5%" y="-5%" width="110%" height="110%"><feGaussianBlur stdDeviation="0.800"/></filter></defs><g filter="url(#bl)"><rect x="-3" y="-3" width="147" height="80" fill="url(#vw)"/><rect x="51" y="-3" width="93" height="44" fill="#f3f2ee"/><rect x="59.5" y="-3" width="4.5" height="44" fill="#343034"/><rect x="17.6" y="-3" width="25.4" height="30.6" fill="#1c181c"/><path d="M19 13L26 15" stroke="#d8d4d0" stroke-width="0.9"/><rect x="44" y="46" width="100" height="30" fill="url(#vs)"/><rect x="51" y="37.3" width="93" height="4.2" fill="#3b3838"/><path d="M115 37.300C113 28 114 18 119 14C124 12 131 12 135 15C138 20 136 30 134 37.300Z" fill="#c2a482"/><path d="M134 6L140 10L137 15" stroke="#6a8a78" stroke-width="1.200" fill="none"/><rect x="-3" y="55.700" width="11" height="21" fill="#8a6a4a"/><path d="M61 30C58 12 66 -3 84 -3C102 -3 110 10 108 28C107 40 104 50 100 57L66 57C62 50 62 40 61 30Z" fill="#30282a"/><path d="M67.500 28C66.500 14 73 7 83 7.500C94 8 100 15 99 30C98 43 92 55 83.500 57C75 56 68.500 42 67.500 28Z" fill="url(#vf)"/><path d="M70 24.500Q74.500 22.500 78.500 25M87.500 25Q91.500 22.500 96 24.500" stroke="#2e2220" stroke-width="1.300" fill="none"/><path d="M71.500 27.500Q74.500 26.500 77.500 28M88.500 28Q91.500 26.500 94.500 27.500" stroke="#3a2c2a" stroke-width="1.100" fill="none"/><path d="M78 44.500Q83.500 46.500 89 44.500" stroke="#8a4e4a" stroke-width="1.600" fill="none"/><path d="M76 54H91V64H76Z" fill="#ac8272"/><path d="M18 76C24 63 42 57 62 54C70 53 75 60 83.500 64C92 60 97 52.500 106 54C122 57 134 64 139 76Z" fill="#161518"/></g></svg></div>

<div class="abs tx" style="left:480.00px;top:520.17px;font-size:9.6px;line-height:12px;color:#fff;transform:scaleX(0.9611);transform-origin:0 50%;text-shadow:0 0 2px #000;">Homolková Simona</div>
<svg class="abs" style="left:661.5px;top:481px" width="34" height="34" viewBox="0 0 26 26"><defs><clipPath id="sa3"><circle cx="13" cy="13" r="13"/></clipPath><filter id="sa3b" x="-10%" y="-10%" width="120%" height="120%"><feGaussianBlur stdDeviation="0.450"/></filter></defs><g clip-path="url(#sa3)"><g filter="url(#sa3b)"><rect x="-2" y="-2" width="30" height="30" fill="#e9e7e4"/><path d="M6.500 26C6 16 7 7.500 13.500 7C20 7.500 20.500 16 20 26Z" fill="#d9c9a4"/><ellipse cx="13.500" cy="13.500" rx="3.700" ry="4.800" fill="#d8a890"/><path d="M11.500 12.500H12.700M14.500 12.500H15.700" stroke="#5a4038" stroke-width="0.700"/><path d="M12.300 16H14.700" stroke="#a86058" stroke-width="0.700"/><path d="M8 26C8.500 21.500 11 20 13.500 20C16 20 18.500 21.500 19 26Z" fill="#c8c4c0"/><rect x="19.500" y="17" width="6" height="9" fill="#b8b8b8"/></g></g></svg>
<div class="abs" style="left:615px;top:510.5px;width:25px;height:18px;border-radius:3px;background:#2a2a2a"></div><svg class="abs" style="left:615px;top:510px" width="25" height="18"><g fill="#e0e0e0"><circle cx="8.5" cy="9.5" r="1"/><circle cx="12.5" cy="9.5" r="1"/><circle cx="16.5" cy="9.5" r="1"/></g></svg>
<div id="panel" class="abs"></div>
<div class="abs tx" style="left:766.00px;top:108.28px;font-size:12.47px;line-height:15px;font-weight:bold;color:#fff;transform:scaleX(0.9613);transform-origin:0 50%;">Účastníci</div>
<svg class="abs" style="left:936px;top:106px" width="50" height="22" viewBox="936 106 50 22"><g fill="#e6e6e6"><circle cx="942.4" cy="117" r="1.1"/><circle cx="946.3" cy="117" r="1.1"/><circle cx="950.2" cy="117" r="1.1"/></g><path d="M966.5 112.5L975.5 121.5M975.5 112.5L966.5 121.5" stroke="#e0e0e0" stroke-width="1.1"/></svg>
<div class="abs" style="left:766px;top:142px;width:218px;height:25px;background:#3b3a39;border-radius:3px"></div>
<div class="abs tx" style="left:775.60px;top:148.17px;font-size:11.34px;line-height:14px;color:#b3b0ad;transform:scaleX(0.9615);transform-origin:0 50%;">Napište jméno</div>
<div class="abs" style="left:766px;top:175px;width:218px;height:25px;border:1px solid #6a6a6a;border-radius:2px;background:#2c2c2c"></div>
<div class="abs tx" style="left:845.80px;top:181.87px;font-size:10.77px;line-height:13px;font-weight:bold;color:#fff;transform:scaleX(0.9611);transform-origin:0 50%;">Sdílet pozvánku</div>
<svg class="abs" style="left:825px;top:180.5px" width="14" height="14" viewBox="0 0 14 14" fill="none" stroke="#e8e8e8" stroke-width="1"><circle cx="3" cy="7" r="1.7"/><circle cx="10.4" cy="2.9" r="1.7"/><circle cx="10.4" cy="11.1" r="1.7"/><path d="M4.5 6.2L8.9 3.7M4.5 7.8L8.9 10.3"/></svg>
<svg class="abs" style="left:766.7px;top:212.3px" width="26" height="26" viewBox="0 0 26 26"><defs><clipPath id="pa0"><circle cx="13" cy="13" r="13"/></clipPath><filter id="pa0b" x="-10%" y="-10%" width="120%" height="120%"><feGaussianBlur stdDeviation="0.450"/></filter></defs><g clip-path="url(#pa0)"><g filter="url(#pa0b)"><rect x="-2" y="-2" width="30" height="30" fill="#2f3a2a"/><rect x="-2" y="9" width="30" height="8" fill="#3f5a38"/><rect x="-2" y="18" width="30" height="10" fill="#4a4a4e"/><path d="M3 8L7 12L5 18" stroke="#8fa0b8" stroke-width="1.600" fill="none"/><path d="M11 6L13 9L11.500 16L13.500 20" stroke="#e8e6b0" stroke-width="2.600" fill="none"/><path d="M15 8L21 6.500" stroke="#d8d8d0" stroke-width="1.400"/><rect x="17" y="10" width="9" height="4" fill="#2f6a3a"/></g></g></svg>
<div class="abs dot" style="left:783px;top:228.8px"></div>
<div class="abs tx" style="left:797.50px;top:219.19px;font-size:10.7px;line-height:13px;color:#fff;transform:scaleX(1.0334);transform-origin:0 50%;">Chlouba Matěj</div>
<svg class="abs" style="left:956px;top:217px" width="16" height="16" viewBox="0 0 16 16" fill="none" stroke="#d6d6d6" stroke-width="1" stroke-linecap="round"><rect x="6" y="1.8" width="4" height="7.4" rx="2"/><path d="M3.9 7.2a4.1 4.1 0 0 0 8.2 0M8 11.4V13.8M5.8 13.8H10.2"/><path d="M2.6 1.8L13.4 14.2" stroke="#2c2c2c" stroke-width="2.600"/><path d="M3 2.2L13 13.800"/></svg>
<svg class="abs" style="left:766.7px;top:251.3px" width="26" height="26" viewBox="0 0 26 26"><defs><clipPath id="pa1"><circle cx="13" cy="13" r="13"/></clipPath><filter id="pa1b" x="-10%" y="-10%" width="120%" height="120%"><feGaussianBlur stdDeviation="0.450"/></filter></defs><g clip-path="url(#pa1)"><g filter="url(#pa1b)"><defs><linearGradient id="sky" x1="0.700" y1="0" x2="0.200" y2="1"><stop offset="0" stop-color="#1f4f86"/><stop offset="0.450" stop-color="#5d8fc6"/><stop offset="0.800" stop-color="#b9c6e0"/><stop offset="1" stop-color="#d8c4d0"/></linearGradient></defs><rect x="-2" y="-2" width="30" height="30" fill="url(#sky)"/><path d="M8 28C9 22 12 20 13 17C12.500 14 14 12 16 12.500C18 13 18.500 15.500 18 17.500C20 20 22 22 22 28Z" fill="#1c2234"/></g></g></svg>
<div class="abs dot" style="left:783px;top:267.8px"></div>
<div class="abs tx" style="left:797.50px;top:258.19px;font-size:10.7px;line-height:13px;color:#fff;transform:scaleX(0.9862);transform-origin:0 50%;">Jaskóová Marie</div>
<svg class="abs" style="left:956px;top:256px" width="16" height="16" viewBox="0 0 16 16" fill="none" stroke="#d6d6d6" stroke-width="1" stroke-linecap="round"><rect x="6" y="1.8" width="4" height="7.4" rx="2"/><path d="M3.9 7.2a4.1 4.1 0 0 0 8.2 0M8 11.4V13.8M5.8 13.8H10.2"/><path d="M2.6 1.8L13.4 14.2" stroke="#2c2c2c" stroke-width="2.600"/><path d="M3 2.2L13 13.800"/></svg>
<div class="abs av" style="left:766.6px;top:290px;width:26px;height:26px;background:#e2dff5"></div>
<div class="abs tx" style="left:774.95px;top:298.08px;font-size:9.3px;line-height:11px;color:#4e4a8c;transform:scaleX(0.8387);transform-origin:50% 50%;">JJ</div>
<div class="abs dot" style="left:783px;top:306.8px"></div>
<div class="abs tx" style="left:797.50px;top:297.19px;font-size:10.7px;line-height:13px;color:#fff;transform:scaleX(0.9510);transform-origin:0 50%;">Jehlička Jan</div>
<svg class="abs" style="left:956px;top:295px" width="16" height="16" viewBox="0 0 16 16" fill="none" stroke="#d6d6d6" stroke-width="1" stroke-linecap="round"><rect x="6" y="1.8" width="4" height="7.4" rx="2"/><path d="M3.9 7.2a4.1 4.1 0 0 0 8.2 0M8 11.4V13.8M5.8 13.8H10.2"/><path d="M2.6 1.8L13.4 14.2" stroke="#2c2c2c" stroke-width="2.600"/><path d="M3 2.2L13 13.800"/></svg>
<div class="abs av" style="left:766.6px;top:329px;width:26px;height:26px;background:#e3e0ea"></div>
<div class="abs tx" style="left:773.40px;top:337.08px;font-size:9.3px;line-height:11px;color:#4a4670;transform:scaleX(0.9350);transform-origin:50% 50%;">KV</div>
<div class="abs dot" style="left:783px;top:345.8px"></div>
<div class="abs tx" style="left:797.50px;top:336.19px;font-size:10.7px;line-height:13px;color:#fff;">Kadavý Vojtěch</div>
<svg class="abs" style="left:956px;top:334px" width="16" height="16" viewBox="0 0 16 16" fill="none" stroke="#d6d6d6" stroke-width="1" stroke-linecap="round"><rect x="6" y="1.8" width="4" height="7.4" rx="2"/><path d="M3.9 7.2a4.1 4.1 0 0 0 8.2 0M8 11.4V13.8M5.8 13.8H10.2"/><path d="M2.6 1.8L13.4 14.2" stroke="#2c2c2c" stroke-width="2.600"/><path d="M3 2.2L13 13.800"/></svg>
<svg class="abs" style="left:766.7px;top:368.3px" width="26" height="26" viewBox="0 0 26 26"><defs><clipPath id="pa4"><circle cx="13" cy="13" r="13"/></clipPath><filter id="pa4b" x="-10%" y="-10%" width="120%" height="120%"><feGaussianBlur stdDeviation="0.450"/></filter></defs><g clip-path="url(#pa4)"><g filter="url(#pa4b)"><rect x="-2" y="-2" width="30" height="30" fill="#a9a8ba"/><rect x="-2" y="-2" width="8" height="30" fill="#d8b8c0"/><path d="M5 6L9 1L12 7L17 6.500L20 1.500L23 9C25 14 23 22 17 25H9C4 21 3 12 5 6Z" fill="#dcdce6"/><path d="M10 14C12 11 16 11 18 14L16 21H12Z" fill="#f6f6fa"/><circle cx="10.500" cy="12.500" r="1" fill="#3a3a4a"/><circle cx="17.500" cy="12.500" r="1" fill="#3a3a4a"/><circle cx="14" cy="18.500" r="1.300" fill="#2a2a30"/></g></g></svg>
<div class="abs dot" style="left:783px;top:384.8px"></div>
<div class="abs tx" style="left:797.50px;top:375.19px;font-size:10.7px;line-height:13px;color:#fff;">Kloučková Kristýna</div>
<svg class="abs" style="left:956px;top:373px" width="16" height="16" viewBox="0 0 16 16" fill="none" stroke="#d6d6d6" stroke-width="1" stroke-linecap="round"><rect x="6" y="1.8" width="4" height="7.4" rx="2"/><path d="M3.9 7.2a4.1 4.1 0 0 0 8.2 0M8 11.4V13.8M5.8 13.8H10.2"/><path d="M2.6 1.8L13.4 14.2" stroke="#2c2c2c" stroke-width="2.600"/><path d="M3 2.2L13 13.800"/></svg>
<svg class="abs" style="left:766.7px;top:407.3px" width="26" height="26" viewBox="0 0 26 26"><defs><clipPath id="pa5"><circle cx="13" cy="13" r="13"/></clipPath><filter id="pa5b" x="-10%" y="-10%" width="120%" height="120%"><feGaussianBlur stdDeviation="0.450"/></filter></defs><g clip-path="url(#pa5)"><g filter="url(#pa5b)"><rect x="-2" y="-2" width="30" height="30" fill="#050505"/><path d="M0.500 15.200C3 12.800 7 11.800 10.500 11.500C12.500 10 16 9.600 19 10.300C21.500 10.900 24 12 26 13.200V16.800H0.500Z" fill="#f3d316"/><path d="M11.500 11.600C13.200 10.500 16 10.300 18.200 10.900L19 12.200H11Z" fill="#3a3208"/><circle cx="16.800" cy="16.200" r="2.100" fill="#15130a"/><circle cx="4.200" cy="16.300" r="1.500" fill="#15130a"/><rect x="0" y="17.600" width="26" height="1.300" fill="#2a2608"/></g></g></svg>
<div class="abs dot" style="left:783px;top:423.8px"></div>
<div class="abs tx" style="left:797.50px;top:414.19px;font-size:10.7px;line-height:13px;color:#fff;transform:scaleX(0.9801);transform-origin:0 50%;">Krob Pavel</div>
<svg class="abs" style="left:956px;top:412px" width="16" height="16" viewBox="0 0 16 16" fill="none" stroke="#d6d6d6" stroke-width="1" stroke-linecap="round"><rect x="6" y="1.8" width="4" height="7.4" rx="2"/><path d="M3.9 7.2a4.1 4.1 0 0 0 8.2 0M8 11.4V13.8M5.8 13.8H10.2"/><path d="M2.6 1.8L13.4 14.2" stroke="#2c2c2c" stroke-width="2.600"/><path d="M3 2.2L13 13.800"/></svg>
<svg class="abs" style="left:766.7px;top:446.3px" width="26" height="26" viewBox="0 0 26 26"><defs><clipPath id="pa6"><circle cx="13" cy="13" r="13"/></clipPath><filter id="pa6b" x="-10%" y="-10%" width="120%" height="120%"><feGaussianBlur stdDeviation="0.450"/></filter></defs><g clip-path="url(#pa6)"><g filter="url(#pa6b)"><rect x="-2" y="-2" width="30" height="30" fill="#b97a45"/><path d="M-2 -2H8L5 10L-2 14Z" fill="#7a4a28"/><path d="M28 -2H18L21 10L28 14Z" fill="#8a5630"/><ellipse cx="13" cy="17.500" rx="7.500" ry="6.500" fill="#d8a878"/><ellipse cx="12.500" cy="17.500" rx="4.200" ry="3.600" fill="#2e1d16"/><ellipse cx="11.500" cy="16.600" rx="1.600" ry="1" fill="#6a5048"/><circle cx="6.500" cy="9.500" r="1.500" fill="#20140e"/><circle cx="19" cy="9.500" r="1.500" fill="#20140e"/><rect x="8" y="-2" width="10" height="5" fill="#e8e0d8"/></g></g></svg>
<div class="abs dot" style="left:783px;top:462.8px"></div>
<div class="abs tx" style="left:797.50px;top:453.19px;font-size:10.7px;line-height:13px;color:#fff;transform:scaleX(0.9798);transform-origin:0 50%;">Musilová Jasmína</div>
<svg class="abs" style="left:956px;top:451px" width="16" height="16" viewBox="0 0 16 16" fill="none" stroke="#d6d6d6" stroke-width="1" stroke-linecap="round"><rect x="6" y="1.8" width="4" height="7.4" rx="2"/><path d="M3.9 7.2a4.1 4.1 0 0 0 8.2 0M8 11.4V13.8M5.8 13.8H10.2"/><path d="M2.6 1.8L13.4 14.2" stroke="#2c2c2c" stroke-width="2.600"/><path d="M3 2.2L13 13.800"/></svg>
<div class="abs av" style="left:766.6px;top:485px;width:26px;height:26px;background:#f5dcd6"></div>
<div class="abs tx" style="left:773.40px;top:493.08px;font-size:9.3px;line-height:11px;color:#8c3a2a;transform:scaleX(0.9350);transform-origin:50% 50%;">PK</div>
<div class="abs dot" style="left:783px;top:501.8px"></div>
<div class="abs tx" style="left:797.50px;top:492.19px;font-size:10.7px;line-height:13px;color:#fff;transform:scaleX(0.9800);transform-origin:0 50%;">Plíšková Kateřina</div>
<svg class="abs" style="left:956px;top:490px" width="16" height="16" viewBox="0 0 16 16" fill="none" stroke="#d6d6d6" stroke-width="1" stroke-linecap="round"><rect x="6" y="1.8" width="4" height="7.4" rx="2"/><path d="M3.9 7.2a4.1 4.1 0 0 0 8.2 0M8 11.4V13.8M5.8 13.8H10.2"/><path d="M2.6 1.8L13.4 14.2" stroke="#2c2c2c" stroke-width="2.600"/><path d="M3 2.2L13 13.800"/></svg>
<div class="abs av" style="left:766.6px;top:524px;width:26px;height:26px;background:#d6e4ea"></div>
<div class="abs tx" style="left:773.14px;top:532.08px;font-size:9.3px;line-height:11px;color:#2a4a5a;transform:scaleX(0.8979);transform-origin:50% 50%;">PN</div>
<div class="abs dot" style="left:783px;top:540.8px"></div>
<div class="abs tx" style="left:797.50px;top:531.19px;font-size:10.7px;line-height:13px;color:#fff;transform:scaleX(0.9734);transform-origin:0 50%;">Profousová Nela</div>
<svg class="abs" style="left:956px;top:529px" width="16" height="16" viewBox="0 0 16 16" fill="none" stroke="#d6d6d6" stroke-width="1" stroke-linecap="round"><rect x="6" y="1.8" width="4" height="7.4" rx="2"/><path d="M3.9 7.2a4.1 4.1 0 0 0 8.2 0M8 11.4V13.8M5.8 13.8H10.2"/><path d="M2.6 1.8L13.4 14.2" stroke="#2c2c2c" stroke-width="2.600"/><path d="M3 2.2L13 13.800"/></svg>
<div class="abs" style="left:990px;top:298px;width:5px;height:130px;border-radius:3px;background:#6e6e6e"></div>
<div id="taskbar" class="abs"></div>
<div class="abs" style="left:31px;top:535.600px;width:224px;height:26.400px;background:#f2f2f2"></div>
<div class="abs tx" style="left:57.50px;top:543.63px;font-size:10.02px;line-height:12px;color:#3a3a3a;transform:scaleX(0.9617);transform-origin:0 50%;">Sem zadejte hledaný výraz</div>
<div class="abs" style="left:417px;top:535.5px;width:30px;height:26.5px;background:#37445f"></div>
<svg class="abs" style="left:0;top:535px" width="1000" height="27" viewBox="0 535 1000 27">
<g fill="#fff"><path d="M10 545.2L14.6 544.5V548.6H10ZM15.2 544.4L21 543.5V548.6H15.2ZM10 549.2H14.6V553.3L10 552.6ZM15.2 549.2H21V554.3L15.2 553.4Z"/></g>
<circle cx="47.2" cy="546.6" r="3.3" fill="none" stroke="#222" stroke-width="1.1"/><path d="M44.8 549L40.8 553.2" stroke="#222" stroke-width="1.2"/>
<circle cx="270.5" cy="548.500" r="4.3" fill="none" stroke="#fff" stroke-width="1.7"/>
<g fill="none" stroke="#e8e8e8" stroke-width="1"><rect x="297.5" y="545.5" width="6" height="7"/><path d="M297.5 543.5H303.5M305.5 544V553"/></g><rect x="306.5" y="544" width="1.2" height="2" fill="#e8e8e8"/><rect x="306.5" y="548" width="1.2" height="5" fill="#e8e8e8"/>
<path d="M328 543.5H334L335.5 545H343V554H328Z" fill="#f5c643"/><rect x="328" y="546.5" width="15" height="7.5" fill="#fbdc73"/><rect x="331.5" y="550" width="8" height="4" fill="#4aa3e0"/>
<path d="M360 546L367.5 541.5L375 546V554.5H360Z" fill="#1e7fd0"/><path d="M360 546.5L367.5 551L375 546.5V554.5H360Z" fill="#45b1f0"/>
<circle cx="399.5" cy="548.5" r="7" fill="#de4a3c"/><path d="M399.5 548.5L393.4 552A7 7 0 0 0 399.5 555.5L403 549.5Z" fill="#2fa24f"/><path d="M399.5 548.5L405.6 545A7 7 0 0 1 399.5 555.5Z" fill="#f6c52c"/><circle cx="399.5" cy="548.5" r="3.2" fill="#fff"/><circle cx="399.5" cy="548.5" r="2.5" fill="#4a8af4"/>
<circle cx="437" cy="544.5" r="2.3" fill="#7b83eb"/><rect x="433" y="547.3" width="7.5" height="7" rx="1.5" fill="#5b5fc7"/><circle cx="431" cy="543.8" r="2.8" fill="#7b83eb"/><rect x="425" y="545" width="9" height="9" rx="1" fill="#4b53bc"/><text x="429.5" y="552.2" font-size="6.5" font-weight="bold" fill="#fff" text-anchor="middle" font-family="'Liberation Sans',sans-serif">T</text>
<rect x="459" y="541" width="12" height="14" fill="#fff"/><rect x="456.5" y="543" width="10" height="10" fill="#2b5fb5"/><text x="461.5" y="551.3" font-size="8" font-weight="bold" fill="#fff" text-anchor="middle" font-family="'Liberation Sans',sans-serif">W</text><path d="M467.5 545H470M467.5 547.5H470M467.5 550H470" stroke="#2b5fb5" stroke-width="0.8"/>
<ellipse cx="496" cy="550" rx="6.5" ry="5" fill="#e9e4d6"/><circle cx="493" cy="549" r="1.2" fill="#d33"/><circle cx="496.5" cy="547.3" r="1.2" fill="#3a7bd8"/><circle cx="499.5" cy="549.3" r="1.2" fill="#3b3"/><path d="M497 551L503 541.5L504.5 542.5L499 552Z" fill="#d89a3a"/>
<rect x="519.5" y="541.5" width="15" height="13.5" rx="1.5" fill="#f3b72c"/><rect x="521" y="543" width="9" height="10.5" fill="#fbe4a0"/><text x="525.5" y="551.5" font-size="8.5" font-weight="bold" fill="#e08a10" text-anchor="middle" font-family="'Liberation Sans',sans-serif">O</text>
<rect x="322" y="560.400" width="27.500" height="1.600" fill="#86b3ea"/>
<rect x="386.5" y="560.400" width="27.500" height="1.600" fill="#86b3ea"/>
<rect x="417.5" y="560.400" width="27.500" height="1.600" fill="#86b3ea"/>
<rect x="453" y="560.400" width="27.500" height="1.600" fill="#86b3ea"/>
<rect x="485.5" y="560.400" width="27.500" height="1.600" fill="#86b3ea"/>
<rect x="517.5" y="560.400" width="27.500" height="1.600" fill="#86b3ea"/>
<path d="M807.4 551.3L811.4 547.3L815.4 551.3" fill="none" stroke="#fff" stroke-width="1"/>
<g fill="none" stroke="#fff" stroke-width="0.9"><rect x="825.3" y="545.5" width="4" height="7"/><path d="M824.3 554H830.3M824.8 544.5H829.8M831.3 548V551"/></g>
<path d="M839.5 544H844.5V551H843V553.5H841V551H839.5Z" fill="#fff"/>
<rect x="853.5" y="547" width="9" height="5" fill="none" stroke="#fff" stroke-width="0.9"/><rect x="854.5" y="548" width="4" height="3" fill="#fff"/><rect x="863" y="548.5" width="1.2" height="2" fill="#fff"/>
<g fill="none" stroke="#b8c0cc" stroke-width="0.9"><path d="M870 553.5A8 8 0 0 1 878 545.5M872.5 553.5A5.5 5.5 0 0 1 878 548M875 553.5A3 3 0 0 1 878 550.5"/></g>
<path d="M884.5 548H886.5L889 545.5V553.5L886.5 551H884.5Z" fill="none" stroke="#fff" stroke-width="0.9"/><path d="M891 547.5A3 3 0 0 1 891 551.5M893 546A5 5 0 0 1 893 553" fill="none" stroke="#fff" stroke-width="0.8"/>
<path d="M973 544.500H983.5V552H979.5L977 554.5V552H973Z" fill="none" stroke="#fff" stroke-width="1"/>
</svg>
<div class="abs tx" style="left:903.00px;top:546.49px;font-size:6.37px;line-height:8px;color:#fff;transform:scaleX(0.9620);transform-origin:0 50%;">CES</div>
<div class="abs tx" style="left:936.13px;top:538.78px;font-size:7.27px;line-height:9px;color:#fff;transform:scaleX(0.9611);transform-origin:50% 50%;">8:20</div>
<div class="abs tx" style="left:924.23px;top:550.74px;font-size:7.38px;line-height:9px;color:#fff;transform:scaleX(0.9611);transform-origin:50% 50%;">07.04.2021</div>
</div>
</body>
</html>
